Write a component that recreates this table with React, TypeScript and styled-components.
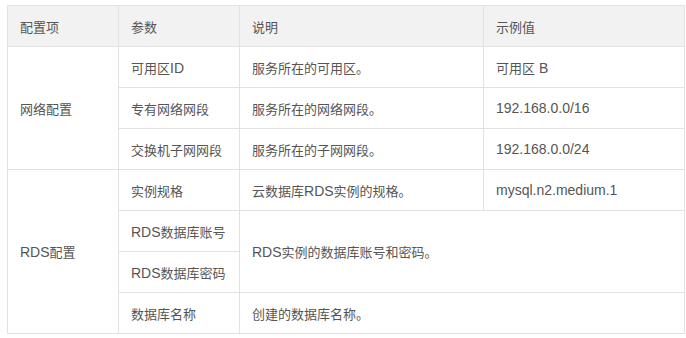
import React from "react";
import styled, { createGlobalStyle } from "styled-components";

const GlobalStyle = createGlobalStyle`
  html, body {
    margin: 0;
    padding: 0;
    background: #ffffff;
  }
  body {
    font-family: "Liberation Sans", "Noto Sans CJK SC", sans-serif;
  }
`;

const Page = styled.div`
  padding: 5px 0 0 7px;
`;

const Table = styled.table`
  border-collapse: collapse;
  table-layout: fixed;
  width: 677px;
  font-size: 13px;
  color: #555555;
`;

const HeadCell = styled.th`
  background: #f2f2f2;
  border: 1px solid #e2e2e2;
  height: 41px;
  padding: 0 12px;
  text-align: left;
  font-weight: normal;
  box-sizing: border-box;
`;

const Cell = styled.td`
  border: 1px solid #e2e2e2;
  height: 41px;
  padding: 0 12px;
  text-align: left;
  vertical-align: middle;
  box-sizing: border-box;
  background: #ffffff;
`;

const Latin = styled.span`
  font-family: "Liberation Sans", sans-serif;
  font-size: 14px;
`;

const Mixed: React.FC<{ text: string }> = ({ text }) => {
  const parts = text.match(/[\x20-\x7e]+|[^\x20-\x7e]+/g) || [];
  return (
    <>
      {parts.map((p, i) =>
        /^[\x20-\x7e]+$/.test(p) ? <Latin key={i}>{p}</Latin> : <React.Fragment key={i}>{p}</React.Fragment>
      )}
    </>
  );
};

const widths = [111, 121, 244, 201];

export default function App() {
  return (
    <>
      <GlobalStyle />
      <Page>
        <Table>
          <colgroup>
            {widths.map((w, i) => (
              <col key={i} style={{ width: w }} />
            ))}
          </colgroup>
          <thead>
            <tr>
              <HeadCell>配置项</HeadCell>
              <HeadCell>参数</HeadCell>
              <HeadCell>说明</HeadCell>
              <HeadCell>示例值</HeadCell>
            </tr>
          </thead>
          <tbody>
            <tr>
              <Cell rowSpan={3}>网络配置</Cell>
              <Cell><Mixed text="可用区ID" /></Cell>
              <Cell>服务所在的可用区。</Cell>
              <Cell><Mixed text="可用区 B" /></Cell>
            </tr>
            <tr>
              <Cell>专有网络网段</Cell>
              <Cell>服务所在的网络网段。</Cell>
              <Cell><Mixed text="192.168.0.0/16" /></Cell>
            </tr>
            <tr>
              <Cell>交换机子网网段</Cell>
              <Cell>服务所在的子网网段。</Cell>
              <Cell><Mixed text="192.168.0.0/24" /></Cell>
            </tr>
            <tr>
              <Cell rowSpan={4}><Mixed text="RDS配置" /></Cell>
              <Cell>实例规格</Cell>
              <Cell><Mixed text="云数据库RDS实例的规格。" /></Cell>
              <Cell><Mixed text="mysql.n2.medium.1" /></Cell>
            </tr>
            <tr>
              <Cell><Mixed text="RDS数据库账号" /></Cell>
              <Cell colSpan={2} rowSpan={2}><Mixed text="RDS实例的数据库账号和密码。" /></Cell>
            </tr>
            <tr>
              <Cell><Mixed text="RDS数据库密码" /></Cell>
            </tr>
            <tr>
              <Cell>数据库名称</Cell>
              <Cell colSpan={2}>创建的数据库名称。</Cell>
            </tr>
          </tbody>
        </Table>
      </Page>
    </>
  );
}
